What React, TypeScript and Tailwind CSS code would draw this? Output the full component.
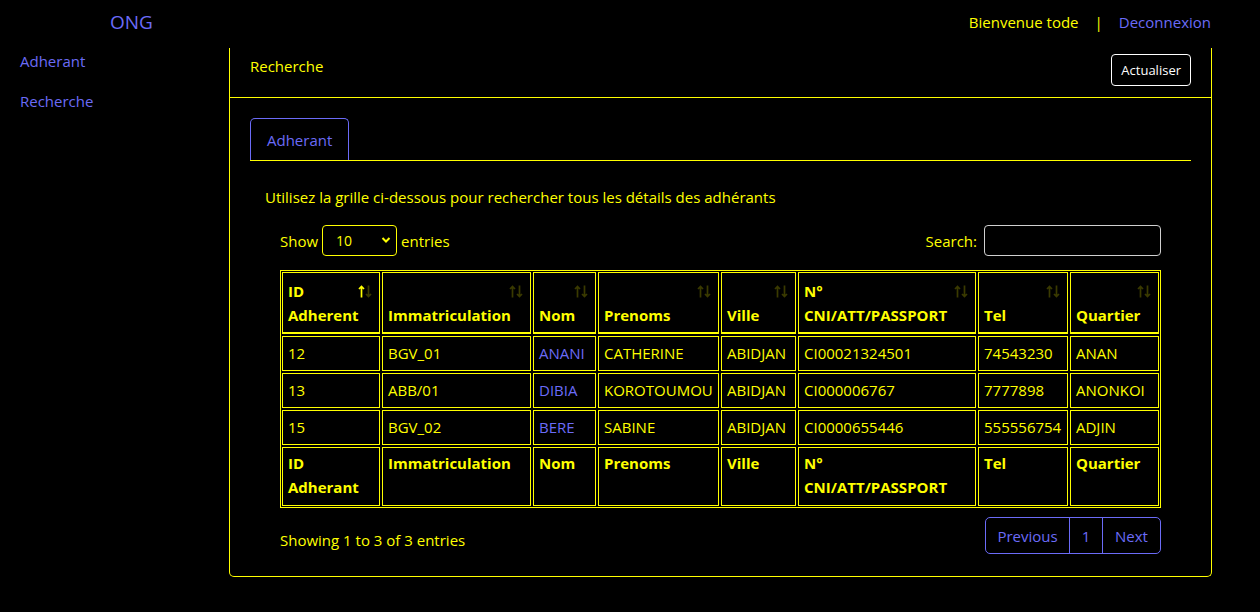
import React from "react";

const cols = [
  { label: ["ID", "Adherent"], foot: ["ID", "Adherant"], w: "w-[98px]" },
  { label: ["Immatriculation"], foot: ["Immatriculation"], w: "w-[149px]" },
  { label: ["Nom"], foot: ["Nom"], w: "w-[63px]" },
  { label: ["Prenoms"], foot: ["Prenoms"], w: "w-[121px]" },
  { label: ["Ville"], foot: ["Ville"], w: "w-[75px]" },
  { label: ["N°", "CNI/ATT/PASSPORT"], foot: ["N°", "CNI/ATT/PASSPORT"], w: "w-[178px]" },
  { label: ["Tel"], foot: ["Tel"], w: "w-[90px]" },
  { label: ["Quartier"], foot: ["Quartier"], w: "w-[89px]" },
];

const rows = [
  ["12", "BGV_01", "ANANI", "CATHERINE", "ABIDJAN", "CI00021324501", "74543230", "ANAN"],
  ["13", "ABB/01", "DIBIA", "KOROTOUMOU", "ABIDJAN", "CI000006767", "7777898", "ANONKOI"],
  ["15", "BGV_02", "BERE", "SABINE", "ABIDJAN", "CI0000655446", "555556754", "ADJIN"],
];

const SortIcon = ({ active }: { active?: boolean }) => (
  <svg width="14" height="13" viewBox="0 0 14 13" fill="none" strokeWidth="1.7">
    <g stroke={active ? "#ffff00" : "#3a3a00"}>
      <path d="M3.5 12.5V1.5M1 4l2.5-2.5L6 4" />
    </g>
    <g stroke="#3a3a00">
      <path d="M10.5 0.5v11M8 9l2.5 2.5L13 9" />
    </g>
  </svg>
);

const App = () => {
  return (
    <div className="w-full h-[612px] bg-black text-[15px] leading-6 text-[#ffff00] font-['Open_Sans',sans-serif] overflow-hidden">
      {/* top bar */}
      <div className="h-[44px] flex items-center justify-between">
        <div className="pl-[110px] text-[19px] text-[#6b6bf7]">ONG</div>
        <div className="flex items-center gap-[16px] pr-[49px]">
          <span className="text-[#ffff00]">Bienvenue tode</span>
          <span className="text-[#ffff00]">|</span>
          <span className="text-[#6b6bf7]">Deconnexion</span>
        </div>
      </div>

      <div className="flex mt-[4px]">
        <div className="w-[229px] pl-[20px] pt-[1px] flex flex-col gap-[16px] text-[#6b6bf7]">
          <span>Adherant</span>
          <span>Recherche</span>
        </div>

        <div className="w-[983px] border border-t-0 border-[#ffff00] rounded-b-[5px]">
          <div className="h-[50px] flex justify-between items-start pt-[6px] px-[20px] border-b border-[#ffff00]">
            <span>Recherche</span>
            <button className="h-[32px] px-[9px] border border-white rounded-[4px] text-white text-[13px]">
              Actualiser
            </button>
          </div>

          <div className="px-[20px] pt-[20px] pb-[19px]">
            <div className="flex border-b border-[#ffff00]">
              <div className="h-[42px] px-[16px] pt-[9px] border border-b-0 border-[#6b6bf7] rounded-t-[5px] text-[#6b6bf7]">
                Adherant
              </div>
            </div>

            <div className="pt-[24px] px-[15px] pb-[3px]">
              <p>Utilisez la grille ci-dessous pour rechercher tous les détails des adhérants</p>

              <div className="px-[15px]">
                <div className="mt-[16px] h-[31px] flex items-center justify-between">
                  <div className="flex items-center gap-[4px]">
                    <span>Show</span>
                    <div className="relative w-[75px] h-[31px]">
                      <select className="appearance-none w-full h-full bg-black border border-[#ffff00] rounded-[4px] pl-[13px] text-[14px] text-[#ffff00] outline-none">
                        <option>10</option>
                        <option>25</option>
                        <option>50</option>
                        <option>100</option>
                      </select>
                      <svg className="absolute right-[6px] top-[11px] pointer-events-none" width="10" height="8" viewBox="0 0 10 8" fill="none">
                        <path d="M1.5 2l3.5 3.5L8.5 2" stroke="#ffff00" strokeWidth="2" />
                      </svg>
                    </div>
                    <span>entries</span>
                  </div>
                  <div className="flex items-center gap-[7px]">
                    <span>Search:</span>
                    <input className="w-[177px] h-[31px] bg-black border border-[#d0d0d0] rounded-[4px] outline-none" />
                  </div>
                </div>

                <div className="mt-[14px] border border-[#ffff00]">
                  <table className="table-fixed w-[calc(100%+2px)] -m-px border-separate border-spacing-[2px]">
                    <thead>
                      <tr>
                        {cols.map((c, i) => (
                          <th
                            key={i}
                            className={`${c.w} relative align-bottom text-left font-bold border border-b-2 border-[#ffff00] pl-[5px] pr-[4px] pt-[6px] pb-[5px] leading-6 h-[62px]`}
                          >
                            <span className="absolute right-[7px] top-[12px]">
                              <SortIcon active={i === 0} />
                            </span>
                            {c.label.map((l, j) => (
                              <div key={j} className="whitespace-nowrap">{l}</div>
                            ))}
                          </th>
                        ))}
                      </tr>
                    </thead>
                    <tbody>
                      {rows.map((r, i) => (
                        <tr key={i}>
                          {r.map((v, j) => (
                            <td
                              key={j}
                              className={`border border-[#ffff00] pl-[5px] pr-[3px] py-[5px] leading-[23px] whitespace-nowrap ${
                                j === 2 ? "text-[#6b6bf7]" : ""
                              }`}
                            >
                              {v}
                            </td>
                          ))}
                        </tr>
                      ))}
                    </tbody>
                    <tfoot>
                      <tr>
                        {cols.map((c, i) => (
                          <th
                            key={i}
                            className="align-top text-left font-bold border border-[#ffff00] pl-[5px] pr-[4px] pt-[3px] pb-[6px] leading-6"
                          >
                            {c.foot.map((l, j) => (
                              <div key={j} className="whitespace-nowrap">{l}</div>
                            ))}
                          </th>
                        ))}
                      </tr>
                    </tfoot>
                  </table>
                </div>

                <div className="mt-[9px] flex justify-between items-start">
                  <span className="pt-[11px]">Showing 1 to 3 of 3 entries</span>
                  <div className="flex h-[37px] border border-[#6b6bf7] rounded-[5px] text-[#6b6bf7]">
                    <span className="w-[84px] flex items-center justify-center border-r border-[#6b6bf7]">Previous</span>
                    <span className="w-[33px] flex items-center justify-center border-r border-[#6b6bf7]">1</span>
                    <span className="w-[57px] flex items-center justify-center">Next</span>
                  </div>
                </div>
              </div>
            </div>
          </div>
        </div>
      </div>
    </div>
  );
};

export default App;
